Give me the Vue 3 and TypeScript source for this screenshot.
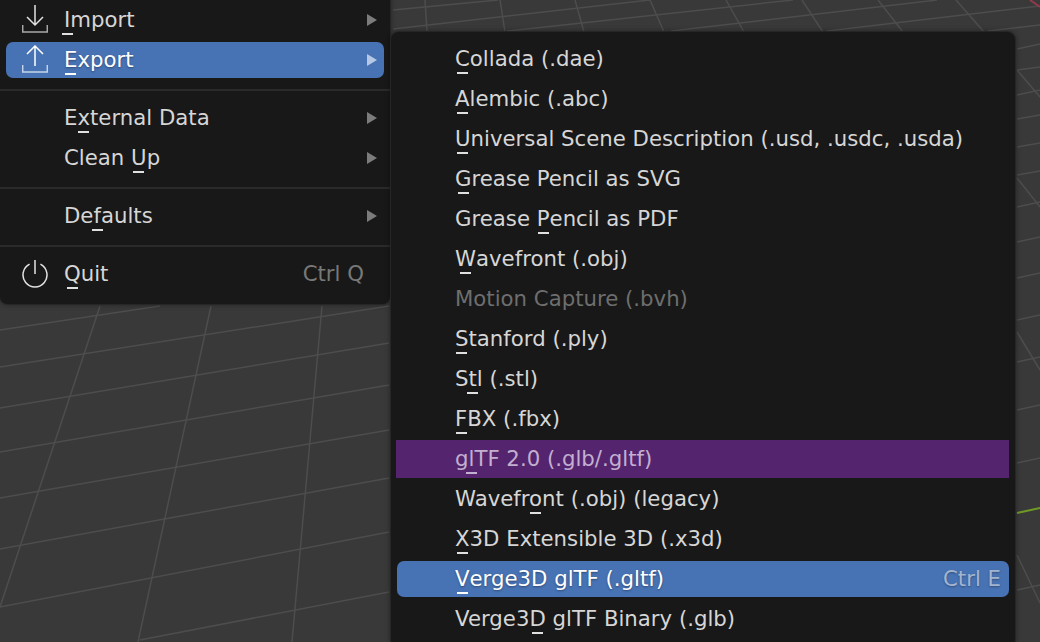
<script setup lang="ts">
interface Item { label: string; key?: number; icon?: string; arrow?: boolean; shortcut?: string; state?: string; sepBefore?: boolean }

const gridLines: number[][] = [
  [393,10,498,0],[393,29,650,0],[507,31,793,0],[671,31,937,0],[827,31,1040,6],[988,31,1040,25],
  [425,0,427,32],[500,0,505,32],[575,0,584,32],[650,0,664,32],[726,0,744,32],[802,0,823,32],[878,0,903,32],[956,0,984,32],
  [0,330,160,306],[0,367,389,306],[0,408,389,343],[0,452,389,385],[0,498,389,430],[0,549,389,478],[0,607,389,532],[140,640,389,592],
  [100,306,0,607],[211,306,138,642],[322,306,292,642],
  [1017,49,1040,44],[1017,70,1040,67],[1017,95,1040,90],[1017,119,1040,115],[1017,147,1040,143],[1017,175,1040,171],
  [1017,207,1040,202],[1017,242,1040,237],[1017,278,1040,273],[1017,320,1040,315],[1017,362,1040,357],[1017,410,1040,405],
  [1017,463,1040,458],[1017,590,1040,585],
  [1017,70,1040,97],[1017,178,1040,207],[1017,332,1040,370],[1017,555,1040,603],
]

const mainMenu: Item[] = [
  { label: 'Import', key: 0, icon: 'import', arrow: true },
  { label: 'Export', key: 0, icon: 'export', arrow: true, state: 'active' },
  { label: 'External Data', key: 1, arrow: true, sepBefore: true },
  { label: 'Clean Up', key: 6, arrow: true },
  { label: 'Defaults', key: 2, arrow: true, sepBefore: true },
  { label: 'Quit', key: 0, icon: 'quit', shortcut: 'Ctrl Q', sepBefore: true },
]

const subMenu: Item[] = [
  { label: 'Collada (.dae)', key: 0 },
  { label: 'Alembic (.abc)', key: 0 },
  { label: 'Universal Scene Description (.usd, .usdc, .usda)', key: 0 },
  { label: 'Grease Pencil as SVG', key: 0 },
  { label: 'Grease Pencil as PDF', key: 7 },
  { label: 'Wavefront (.obj)', key: 0 },
  { label: 'Motion Capture (.bvh)', state: 'disabled' },
  { label: 'Stanford (.ply)', key: 0 },
  { label: 'Stl (.stl)', key: 1 },
  { label: 'FBX (.fbx)', key: 0 },
  { label: 'glTF 2.0 (.glb/.gltf)', key: 1, state: 'marked' },
  { label: 'Wavefront (.obj) (legacy)', key: 6 },
  { label: 'X3D Extensible 3D (.x3d)', key: 0 },
  { label: 'Verge3D glTF (.gltf)', key: 0, shortcut: 'Ctrl E', state: 'active' },
  { label: 'Verge3D glTF Binary (.glb)', key: 6 },
]

function parts(item: Item): [string, string, string] {
  if (item.key === undefined) return [item.label, '', '']
  return [item.label.slice(0, item.key), item.label[item.key], item.label.slice(item.key + 1)]
}
</script>

<template>
  <div class="viewport">
    <svg class="grid" width="1040" height="642" viewBox="0 0 1040 642">
      <line v-for="(l, i) in gridLines" :key="i" :x1="l[0]" :y1="l[1]" :x2="l[2]" :y2="l[3]" stroke="#4d4d4d" stroke-width="1.5" />
      <line x1="1030" y1="0" x2="1040" y2="7" stroke="#8f3b4c" stroke-width="2" />
      <line x1="1017" y1="513" x2="1040" y2="508" stroke="#6f9a25" stroke-width="2" />
    </svg>

    <div class="menus">
      <div class="panel main">
        <template v-for="item in mainMenu" :key="item.label">
          <div v-if="item.sepBefore" class="sep"></div>
          <div class="row" :class="item.state">
            <span class="icon">
              <svg v-if="item.icon === 'import'" width="26" height="30" viewBox="0 0 26 30">
                <path class="tray" d="M0.7 20v7h24.6v-7" />
                <path class="glyph" d="M13 0v20M5 12l8 8 8-8" />
              </svg>
              <svg v-else-if="item.icon === 'export'" width="26" height="30" viewBox="0 0 26 30">
                <path class="tray" d="M0.7 20v7h24.6v-7" />
                <path class="glyph" d="M13 1v20M5 9l8-8 8 8" />
              </svg>
              <svg v-else-if="item.icon === 'quit'" width="26" height="30" viewBox="0 0 26 30">
                <path class="glyph" d="M7.6 5.2a12 12 0 1 0 10.8 0M13 1v14" />
              </svg>
            </span>
            <span class="label">{{ parts(item)[0] }}<span v-if="parts(item)[1]" class="k">{{ parts(item)[1] }}</span>{{ parts(item)[2] }}</span>
            <span v-if="item.shortcut" class="shortcut">{{ item.shortcut }}</span>
            <span v-if="item.arrow" class="arrow"></span>
          </div>
        </template>
      </div>

      <div class="panel sub">
        <div v-for="item in subMenu" :key="item.label" class="row" :class="item.state">
          <span class="label">{{ parts(item)[0] }}<span v-if="parts(item)[1]" class="k">{{ parts(item)[1] }}</span>{{ parts(item)[2] }}</span>
          <span v-if="item.shortcut" class="shortcut">{{ item.shortcut }}</span>
        </div>
      </div>
    </div>
  </div>
</template>

<style>
html, body { margin: 0; background: #393939; }
</style>

<style scoped>
.viewport {
  position: relative;
  width: 1040px;
  height: 642px;
  overflow: hidden;
  background: #393939;
  font-family: "DejaVu Sans", sans-serif;
  font-size: 21.25px;
  color: #d6d6d6;
}
.grid { position: absolute; inset: 0; }
.menus { position: relative; display: flex; align-items: flex-start; }

.panel {
  background: #181818;
  box-sizing: border-box;
  box-shadow: 0 0 0 1px #262626, 0 0 4px 2px rgba(0, 0, 0, .25);
  border-radius: 8px;
}
.main {
  width: 390px;
  margin-top: -8px;
  padding: 8px 0 10px;
  flex: none;
}
.sub {
  width: 624px;
  margin: 32px 0 0 1px;
  padding: 7px 6px 8px 6px;
  flex: none;
}

.row {
  position: relative;
  display: flex;
  align-items: center;
  height: 40px;
  box-sizing: border-box;
}
.main .row { margin: 0 6px; padding: 0 20px 0 16px; }
.sub .row { padding: 0 8px 0 58px; }

.icon { width: 26px; height: 30px; margin-right: 16px; flex: none; }
.icon svg { display: block; }
.tray { fill: none; stroke: #a8a8a8; stroke-width: 1.5; }
.glyph { fill: none; stroke: #e2e2e2; stroke-width: 1.5; }

.label { flex: 1; white-space: pre; padding-bottom: 2px; }
.k { position: relative; }
.k::after {
  content: "";
  position: absolute;
  left: 50%;
  bottom: -3px;
  width: 11px;
  height: 1.5px;
  margin-left: -5.5px;
  background: #e0e0e0;
}

.shortcut { color: #787878; padding-bottom: 2px; }
.arrow {
  width: 0;
  height: 0;
  margin-right: -13px;
  border-style: solid;
  border-width: 6px 0 6px 10px;
  border-color: transparent transparent transparent #7c7c7c;
}

.sep { height: 2px; margin: 9px 0 7px; background: #2a2a2a; }

.active::before {
  content: "";
  position: absolute;
  inset: 2px 0;
  background: #4772b3;
  border-radius: 7px;
}
.active > * { position: relative; }
.active { color: #fff; }
.active .label { text-shadow: 0 1px 2px rgba(0, 0, 0, .35); }
.active .shortcut { color: #a3b4cf; text-shadow: 0 1px 2px rgba(0, 0, 0, .3); }
.active .arrow { border-left-color: #b5c8e6; }
.active .tray { stroke: #c4d3ea; }
.active .glyph { stroke: #fff; }
.active .k::after { background: #fff; }

.disabled { color: #6e6e6e; }

.marked { color: #c3afcf; }
.marked::before {
  content: "";
  position: absolute;
  inset: 1px 0 1px -1px;
  background: #54246f;
}
.marked > * { position: relative; }
.marked .k::after { background: #c3afcf; }
</style>
